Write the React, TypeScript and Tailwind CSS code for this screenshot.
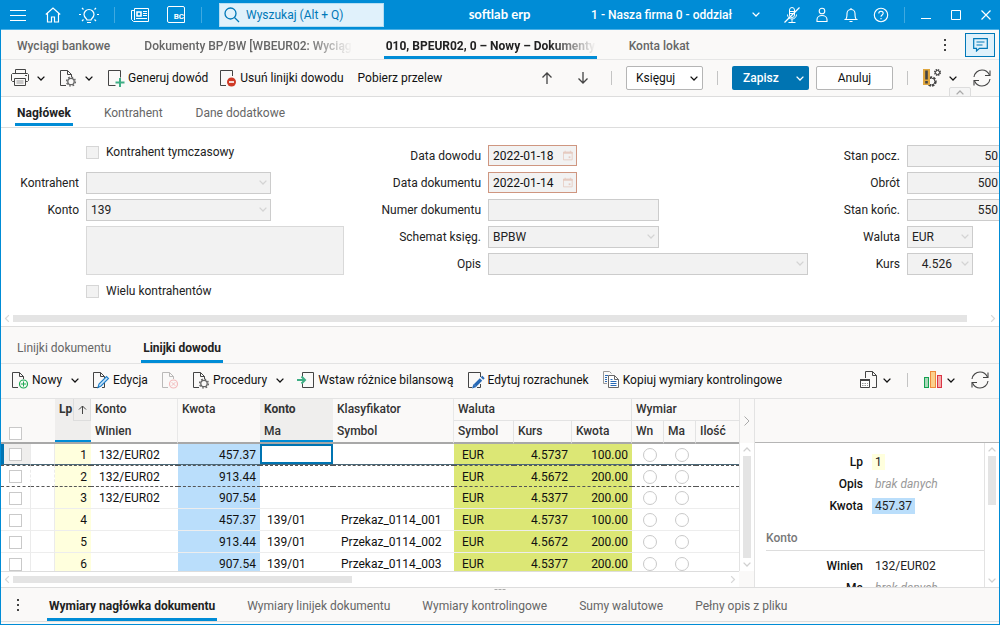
import { useState } from "react";
import clsx from "clsx";

interface IconProps {
  className?: string;
}

interface FieldProps {
  id: string;
  label: string;
  value?: string;
  className?: string;
}

interface Row {
  lp: number;
  winien: string;
  kwota: string;
  ma: string;
  symbol: string;
  kurs: string;
  kwotaWal: string;
}

const rows: Row[] = [
  { lp: 1, winien: "132/EUR02", kwota: "457.37", ma: "", symbol: "", kurs: "4.5737", kwotaWal: "100.00" },
  { lp: 2, winien: "132/EUR02", kwota: "913.44", ma: "", symbol: "", kurs: "4.5672", kwotaWal: "200.00" },
  { lp: 3, winien: "132/EUR02", kwota: "907.54", ma: "", symbol: "", kurs: "4.5377", kwotaWal: "200.00" },
  { lp: 4, winien: "", kwota: "457.37", ma: "139/01", symbol: "Przekaz_0114_001", kurs: "4.5737", kwotaWal: "100.00" },
  { lp: 5, winien: "", kwota: "913.44", ma: "139/01", symbol: "Przekaz_0114_002", kurs: "4.5672", kwotaWal: "200.00" },
  { lp: 6, winien: "", kwota: "907.54", ma: "139/01", symbol: "Przekaz_0114_003", kurs: "4.5377", kwotaWal: "200.00" },
];

const Chevron = ({ className }: IconProps) => (
  <svg viewBox="0 0 8 5" className={clsx("h-[5px] w-2 shrink-0", className)} fill="none" stroke="currentColor" strokeWidth="1.3">
    <path d="M0.6 0.6 4 4l3.4-3.4" />
  </svg>
);

/* page outline with a folded corner, shared by most toolbar icons */
const Sheet = () => <path d="M7 16.5H1.5v-15h7l4 4V8M8.5 1.5v4h4" stroke="#444" />;

const PrinterIcon = () => (
  <svg viewBox="0 0 18 18" className="h-[18px] w-[18px]" fill="none" stroke="#444">
    <path d="M4.5 4.5v-4h10v4M3.500 12.500h-2l-1-1v-6l1-1h15l1 1v6l-1 1h-2M3.500 9.500h11v7h-11z" />
    <path d="M5.500 12h7M5.500 14h7" stroke="#999" />
    <path d="M14 6.5h2" />
  </svg>
);

const SheetGearIcon = () => (
  <svg viewBox="0 0 18 18" className="h-[18px] w-[18px]" fill="none">
    <Sheet />
    <circle cx="12" cy="12.5" r="3.2" stroke="#666" strokeWidth="1.3" />
    <circle cx="12" cy="12.5" r="4.4" stroke="#666" strokeWidth="1.4" strokeDasharray="1.7 1.75" />
  </svg>
);

const SheetPlusIcon = () => (
  <svg viewBox="0 0 18 18" className="h-[18px] w-[18px]" fill="none">
    <path d="M8.5 16.5h-7v-15h12v7" stroke="#444" />
    <path d="M13 9v9M8.5 13.5h9" stroke="#3fae85" strokeWidth="2" />
  </svg>
);

const SheetMinusIcon = () => (
  <svg viewBox="0 0 18 18" className="h-[18px] w-[18px]" fill="none">
    <path d="M7 16.5H1.5v-15h12V7" stroke="#444" />
    <circle cx="12.5" cy="13" r="4.5" fill="#cf3a26" />
    <path d="M10 13h5" stroke="#fff" strokeWidth="1.6" />
  </svg>
);

const NewSheetIcon = () => (
  <svg viewBox="0 0 18 18" className="h-[18px] w-[18px]" fill="none">
    <Sheet />
    <circle cx="12.5" cy="13" r="4" stroke="#1faa53" strokeWidth="1.2" />
    <path d="M12.5 10.5v5M10 13h5" stroke="#1faa53" />
  </svg>
);

const EditSheetIcon = () => (
  <svg viewBox="0 0 18 18" className="h-[18px] w-[18px]" fill="none">
    <Sheet />
    <path d="M12.5 12v4.5H10" stroke="#444" />
    <path d="m6 16.500 1-3.500 7.500-7.500 2 2L9 15z" fill="#cfe6f8" stroke="#1e7fcb" strokeWidth="1.1" />
  </svg>
);

const DeleteSheetIcon = () => (
  <svg viewBox="0 0 18 18" className="h-[18px] w-[18px]" fill="none" opacity="0.35">
    <Sheet />
    <circle cx="12.5" cy="13" r="4" stroke="#e5484d" strokeWidth="1.2" />
    <path d="m10.7 11.200 3.600 3.600m0-3.600-3.600 3.600" stroke="#e5484d" />
  </svg>
);

const InsertIcon = () => (
  <svg viewBox="0 0 18 18" className="h-[18px] w-[18px]" fill="none">
    <path d="M5.5 6V1.5h11v15h-11V12" stroke="#444" />
    <path d="M0 9h8M4.500 5.500 8 9l-3.500 3.500" stroke="#3fae85" strokeWidth="2" />
  </svg>
);

const EditFormIcon = () => (
  <svg viewBox="0 0 18 18" className="h-[18px] w-[18px]" fill="none">
    <path d="M5 16.5H1.5v-15h12V6M13.5 13v3.500H10" stroke="#444" />
    <path d="m8 14.500 6-6" stroke="#2769b5" strokeWidth="3.4" />
    <path d="m15 7.500 1.500-1.500" stroke="#2769b5" strokeWidth="3.4" />
    <path d="M5 17.500 6.500 13l3 3z" fill="#2769b5" />
  </svg>
);

const CopyIcon = () => (
  <svg viewBox="0 0 18 18" className="h-[18px] w-[18px]" fill="none">
    <path d="M5 12.500H1.500v-12h6l2 2" stroke="#999" />
    <path d="M3 4.500h3M3 6.500h2M3 8.500h2M3 10.500h2" stroke="#2769b5" />
    <path d="M6.500 4.500h6l4 4v8h-10zM12.500 4.500v4h4" stroke="#666" fill="#fff" />
    <path d="M8.500 8.500h2M8.500 10.500h6M8.500 12.500h6M8.500 14.500h6" stroke="#2769b5" />
  </svg>
);

const WarnGearIcon = () => (
  <svg viewBox="0 0 18 18" className="h-[18px] w-[18px]" fill="none" stroke="#444">
    <circle cx="8.5" cy="12.500" r="4.300" strokeWidth="1.8" strokeDasharray="2.4 1.2" />
    <circle cx="8.5" cy="12.500" r="3.400" />
    <circle cx="14.5" cy="3.500" r="2.700" strokeWidth="1.6" strokeDasharray="1.4 0.7" />
    <circle cx="14.5" cy="3.500" r="2" />
    <rect x="0" y="0" width="7" height="16" fill="#dfa63e" stroke="none" />
    <path d="M3.500 1.500v9M3.500 12v2.500" strokeWidth="2.6" />
  </svg>
);

const RefreshIcon = () => (
  <svg viewBox="0 0 18 18" className="h-[18px] w-[18px]" fill="none" stroke="#444" strokeWidth="1.1">
    <path d="M1 8C1.500 4 5 1 9 1c3.500 0 6 1.800 7.500 5M17 10c-.5 4-4 7-8 7-3.500 0-6-1.800-7.500-5" />
    <path d="M17 1.500v5h-5M1 16.500v-5h5" />
  </svg>
);

const PrintGridIcon = () => (
  <svg viewBox="0 0 18 18" className="h-[18px] w-[18px]" fill="none" stroke="#444">
    <path d="M5.500 7V0.500h7l4 4v12H12M12.500 0.500v4h4" />
    <path d="M0.500 8.500h9v8h-9z" fill="#fff" />
    <path d="M0 9h10" strokeWidth="2" />
    <path d="M2 12.500h6M2 14.500h6" stroke="#999" strokeDasharray="1.5 1" />
  </svg>
);

const ChartIcon = () => (
  <svg viewBox="0 0 18 18" className="h-[18px] w-[18px]">
    <rect x="0.5" y="6.500" width="4" height="10" fill="#a9d8b9" stroke="#14a150" />
    <rect x="6.5" y="0.500" width="5" height="16" fill="#fbd08c" stroke="#ee8a3c" />
    <rect x="13.5" y="4.500" width="4" height="12" fill="#f3a9a9" stroke="#dc3545" />
  </svg>
);

const CalendarIcon = () => (
  <svg viewBox="0 0 11 11" className="h-[11px] w-[11px]" fill="none" stroke="#e6cbc1">
    <path d="M0.500 1.500h10v9h-10z" />
    <path d="M0 2.500h11" strokeWidth="2" />
    <path d="M2.500 0v2M8.500 0v2" />
    <path d="M6.500 7.500h2" strokeWidth="2" />
  </svg>
);

const Dots = ({ label }: { label: string }) => (
  <button aria-label={label} className="flex w-4 flex-col items-center gap-[2px]">
    <span className="size-[2px] bg-[#444]" />
    <span className="my-px size-[2px] bg-[#444]" />
    <span className="size-[2px] bg-[#444]" />
  </button>
);

const Divider = () => <span className="h-[14px] w-px shrink-0 bg-[#c4c4c4]" />;

const ToolButton = ({ icon, label, menu }: { icon: React.ReactElement; label: string; menu?: boolean }) => (
  <button className="flex shrink-0 items-center gap-[3px] whitespace-nowrap">
    {icon}
    <span>{label}</span>
    {menu && <Chevron className="ml-1.5" />}
  </button>
);

const IconMenu = ({ icon, label, tight }: { icon: React.ReactElement; label: string; tight?: boolean }) => (
  <button aria-label={label} className={clsx("flex shrink-0 items-center", tight ? "gap-[5px]" : "gap-2")}>
    {icon}
    <Chevron />
  </button>
);

const Tab = ({ label, active, onClick }: { label: string; active: boolean; onClick: () => void }) => (
  <button
    onClick={onClick}
    className={clsx(
      "shrink-0 border-b-3 px-[2px] pt-[5px] whitespace-nowrap",
      active ? "border-[#008cd6] font-bold text-[#222]" : "border-transparent text-[#666]"
    )}
  >
    {label}
  </button>
);

const fieldBox = "h-[22px] rounded-none border border-[#cccccc] bg-[#f2f2f2] px-1 text-[#222] opacity-100";

const TextField = ({ id, label, value = "", className }: FieldProps) => (
  <>
    <label htmlFor={id} className="text-right">{label}</label>
    <input id={id} defaultValue={value} disabled className={clsx(fieldBox, className)} />
  </>
);

const SelectField = ({ id, label, value = "", className }: FieldProps) => (
  <>
    <label htmlFor={id} className="text-right">{label}</label>
    <div className={clsx("relative flex", className)}>
      <select id={id} disabled className={clsx(fieldBox, "w-full appearance-none")}>
        <option>{value}</option>
      </select>
      <Chevron className="absolute top-2 right-1 text-[#d4d4d4]" />
    </div>
  </>
);

const DateField = ({ id, label, value = "" }: FieldProps) => (
  <>
    <label htmlFor={id} className="text-right">{label}</label>
    <div className="flex h-[21px] w-[89px] items-center self-start border border-[#cf9680] bg-[#f2f2f2] pr-[3px]">
      <input id={id} defaultValue={value} disabled className="w-full min-w-0 px-1 text-[#111]" />
      <CalendarIcon />
    </div>
  </>
);

const CheckField = ({ id, label }: { id: string; label: string }) => (
  <div className="col-start-2 flex h-[14px] items-center gap-[7px]">
    <input id={id} type="checkbox" disabled className="size-[13px] appearance-none border border-[#d6d6d6] bg-[#f2f2f2]" />
    <label htmlFor={id}>{label}</label>
  </div>
);

const VScroll = ({ thumb }: { thumb: string }) => (
  <div className="flex w-[15px] shrink-0 flex-col items-center gap-1 border-l border-[#e3e3e3] py-1 text-[#d0d0d0]">
    <Chevron className="rotate-180" />
    <div className="min-h-0 w-2 flex-1">
      <div className={clsx("bg-[#e4e4e4]", thumb)} />
    </div>
    <Chevron />
  </div>
);

const HScroll = ({ thumb }: { thumb: string }) => (
  <div className="flex items-center gap-[2px] px-[2px] text-[#d8d8d8]">
    <Chevron className="rotate-90" />
    <div className="min-w-0 flex-1">
      <div className={clsx("h-[7px] bg-[#e4e4e4]", thumb)} />
    </div>
    <Chevron className="-rotate-90" />
  </div>
);

const TitleBar = () => (
  <header className="flex h-[30px] shrink-0 items-center border-b border-[#4db1e6] bg-[#008cd6] pr-2 pl-[9px] text-white">
    <button aria-label="Menu">
      <svg viewBox="0 0 16 12" className="h-3 w-4" stroke="currentColor">
        <path d="M0 1.500h16M0 6.500h16M0 11.500h16" />
      </svg>
    </button>
    <button aria-label="Start" className="ml-[19px]">
      <svg viewBox="0 0 16 16" className="size-4" fill="none" stroke="currentColor" strokeWidth="1.2">
        <path d="M0.800 7.500 8 1l7.200 6.500M2.500 6.500v8.500h4v-5h3v5h4V6.500" />
      </svg>
    </button>
    <button aria-label="Podpowiedzi" className="ml-[18px]">
      <svg viewBox="0 0 20 18" className="h-[18px] w-5" fill="none" stroke="currentColor" strokeWidth="1.2">
        <path d="M8 14c0-1.500-3-2.500-3-5.500a5 5 0 0 1 10 0c0 3-3 4-3 5.500zM8 16.500h4" />
        <path d="M0 8.500h2M18 8.500h2M3 2l1.500 1.500M17 2l-1.500 1.500M3 15l1.500-1.500M17 15l-1.500-1.500" />
      </svg>
    </button>
    <span className="ml-[15px] h-4 w-px bg-[#3fa9e0]" />
    <button aria-label="Aktualności" className="ml-4">
      <svg viewBox="0 0 18 16" className="h-4 w-[18px]" fill="none" stroke="currentColor">
        <path d="M3.500 1.500h14v13h-15l-2-2v-9h3zM3.500 3v10" />
        <path d="M6 5h4v4H6z" strokeWidth="1.6" />
        <path d="M12 4.500h4M12 6.500h4M12 8.500h4M5 11.500h11" />
      </svg>
    </button>
    <button aria-label="BC" className="ml-[18px] flex h-[17px] w-[18px] items-end justify-end rounded-l-xs rounded-tr-xs border border-white text-[8px] leading-[10px] font-bold">
      BC
    </button>
    <span className="ml-4 h-4 w-px bg-[#3fa9e0]" />
    <label className="ml-[17px] flex h-6 w-[165px] items-center gap-1.5 border border-[#b5def3] bg-[#e0f1fb] px-1 text-[#0078b8]">
      <svg viewBox="0 0 16 16" className="size-4 shrink-0" fill="none" stroke="currentColor" strokeWidth="1.3">
        <circle cx="6.5" cy="6.5" r="5.5" />
        <path d="m10.500 10.500 4.500 4.500" />
      </svg>
      <input aria-label="Wyszukaj" placeholder="Wyszukaj (Alt + Q)" className="w-full min-w-0 outline-none placeholder:text-[#0078b8]" />
    </label>
    <span className="flex-1 pl-6 text-center font-['Lato'] text-[13px] font-bold">softlab erp</span>
    <button className="mr-6 flex items-center gap-5 font-medium">
      1 - Nasza firma 0 - oddział
      <Chevron />
    </button>
    <div className="flex items-center gap-[15px]">
      <button aria-label="Mikrofon">
        <svg viewBox="0 0 16 16" className="size-4" fill="none" stroke="currentColor">
          <path d="M5.500 3a2.500 2.500 0 0 1 5 0v5a2.500 2.500 0 0 1-5 0zM3.500 7.500a4.500 4.500 0 0 0 9 0M8 12v3M4.500 15.500h7M5.500 4.500h5M5.500 6.500h5" />
          <path d="M0.500 15.500 15.500 0.500" strokeWidth="1.3" />
        </svg>
      </button>
      <button aria-label="Użytkownik">
        <svg viewBox="0 0 14 16" className="h-4 w-3.5" fill="none" stroke="currentColor" strokeWidth="1.1">
          <circle cx="7" cy="4" r="2.8" />
          <path d="M2 14.500v-2a5 4 0 0 1 10 0v2z" />
        </svg>
      </button>
      <button aria-label="Powiadomienia">
        <svg viewBox="0 0 14 16" className="h-4 w-3.5" fill="none" stroke="currentColor" strokeWidth="1.1">
          <path d="M1.500 12.500c1.500-1 1.500-3 1.500-6a4 4 0 0 1 8 0c0 3 0 5 1.500 6zM5.500 14.500h3M7 1v1.500" />
        </svg>
      </button>
      <button aria-label="Pomoc">
        <svg viewBox="0 0 16 16" className="size-4" fill="none" stroke="currentColor" strokeWidth="1.1">
          <circle cx="8" cy="8" r="6.7" />
          <path d="M5.800 6.500C5.800 3.600 10.200 3.600 10.200 6.300 10.200 8 8 7.900 8 9.800M8 11v1.300" />
        </svg>
      </button>
    </div>
    <span className="ml-[15px] h-4 w-px bg-[#3fa9e0]" />
    <div className="ml-4 flex items-center gap-5">
      <button aria-label="Minimalizuj">
        <svg viewBox="0 0 10 10" className="size-2.5" stroke="currentColor"><path d="M0 8.500h10" /></svg>
      </button>
      <button aria-label="Maksymalizuj">
        <svg viewBox="0 0 10 10" className="size-2.5" fill="none" stroke="currentColor"><path d="M0.500 0.500h9v9h-9z" /></svg>
      </button>
      <button aria-label="Zamknij">
        <svg viewBox="0 0 10 10" className="size-2.5" stroke="currentColor" strokeWidth="1.2"><path d="m0.500 0.500 9 9m0-9-9 9" /></svg>
      </button>
    </div>
  </header>
);

const documents = ["Wyciągi bankowe", "Dokumenty BP/BW [WBEUR02: Wyciąg", "010, BPEUR02, 0 – Nowy – Dokumenty", "Konta lokat"];

const DocumentTabs = () => {
  const [current, setCurrent] = useState(2);

  return (
    <nav className="flex h-[30px] shrink-0 items-center border-b border-[#e6e6e6] pl-[14px]">
      <div className="flex h-full flex-1 gap-[30px]">
        {documents.map((name, i) => (
          <button
            key={name}
            onClick={() => setCurrent(i)}
            className={clsx(
              "max-w-[213px] overflow-hidden border-b-3 px-px pt-[5px] whitespace-nowrap",
              i === current ? "border-[#008cd6] font-bold text-[#222]" : "border-transparent font-medium text-[#666]"
            )}
          >
            <span className={clsx("block px-px", (i === 1 || i === 2) && "[mask-image:linear-gradient(to_right,black_78%,transparent)]")}>
              {name}
            </span>
          </button>
        ))}
      </div>
      <Dots label="Więcej" />
      <button aria-label="Komentarze" className="mr-1 ml-3 flex h-6 w-[30px] items-center justify-center border border-[#0078b8] bg-[#dff1fb]">
        <svg viewBox="0 0 15 15" className="size-[15px]" fill="none" stroke="#0078b8" strokeWidth="1.2">
          <path d="M0.700 1.700h13.600v9.600H6.500L3.500 14v-2.700H0.700zM3.500 5h8M3.500 8h6" />
        </svg>
      </button>
    </nav>
  );
};

const MainToolbar = () => (
  <div className="relative flex h-[37px] shrink-0 items-center border-b border-[#dddddd] pr-2 pl-[10px] text-[#111]">
    <div className="flex items-center gap-[14px]">
      <IconMenu icon={<PrinterIcon />} label="Drukuj" />
      <IconMenu icon={<SheetGearIcon />} label="Ustawienia dokumentu" />
      <div className="flex items-center gap-[11px]">
        <ToolButton icon={<SheetPlusIcon />} label="Generuj dowód" />
        <ToolButton icon={<SheetMinusIcon />} label="Usuń linijki dowodu" />
      </div>
      <button>Pobierz przelew</button>
    </div>
    <div className="ml-auto flex items-center">
      <button aria-label="W górę">
        <svg viewBox="0 0 12 12" className="size-3" fill="none" stroke="#444" strokeWidth="1.3"><path d="M6 12V1M1.500 5.500 6 1l4.500 4.500" /></svg>
      </button>
      <button aria-label="W dół" className="mr-[22px] ml-6">
        <svg viewBox="0 0 12 12" className="size-3" fill="none" stroke="#444" strokeWidth="1.3"><path d="M6 0v11M1.500 6.500 6 11l4.500-4.500" /></svg>
      </button>
      <Divider />
      <button className="mx-[14px] flex h-6 w-[77px] items-center justify-between rounded-xs border border-[#b5b5b5] bg-white pr-1 pl-[9px]">
        Księguj
        <Chevron />
      </button>
      <Divider />
      <button className="mr-[7px] ml-[14px] flex h-6 w-[77px] items-center justify-between rounded-xs bg-[#0074b2] pr-[5px] pl-[11px] font-medium text-white">
        Zapisz
        <Chevron />
      </button>
      <button className="mr-[14px] h-6 w-[77px] rounded-xs border border-[#b5b5b5] bg-white">Anuluj</button>
      <Divider />
      <div className="ml-[15px]">
        <IconMenu icon={<WarnGearIcon />} label="Ostrzeżenia" />
      </div>
      <button aria-label="Odśwież" className="ml-4"><RefreshIcon /></button>
    </div>
    <button aria-label="Zwiń" className="absolute right-7 -bottom-px flex h-[10px] w-[22px] items-center justify-center rounded-t-xs border border-[#dddddd] bg-[#f5f5f5] text-[#aaa]">
      <Chevron className="rotate-180" />
    </button>
  </div>
);

const HeaderForm = () => {
  const [tab, setTab] = useState("Nagłówek");

  return (
    <section className="shrink-0 bg-white">
      <nav className="flex h-[31px] gap-[29px] border-b border-[#dddddd] pl-[14px]">
        {["Nagłówek", "Kontrahent", "Dane dodatkowe"].map((name) => (
          <div key={name} className="flex h-[29px]">
            <Tab label={name} active={tab === name} onClick={() => setTab(name)} />
          </div>
        ))}
      </nav>
      <div className="flex overflow-hidden pt-[17px] pb-[13px]">
        <div className="grid shrink-0 auto-rows-[22px] grid-cols-[78px_258px] items-center gap-x-[7px] gap-y-[5px]">
          <div className="col-span-2 grid grid-cols-subgrid self-start">
            <CheckField id="tymczasowy" label="Kontrahent tymczasowy" />
          </div>
          <SelectField id="kontrahent" label="Kontrahent" className="w-[185px]" />
          <SelectField id="konto" label="Konto" value="139" className="w-[185px]" />
          <textarea aria-label="Opis kontrahenta" disabled className="col-start-2 row-span-2 h-[49px] w-full resize-none border border-[#d9d9d9] bg-[#f2f2f2]" />
          <CheckField id="wielu" label="Wielu kontrahentów" />
        </div>
        <div className="grid shrink-0 auto-rows-[22px] grid-cols-[137px_320px] items-center gap-x-[7px] gap-y-[5px]">
          <DateField id="data-dowodu" label="Data dowodu" value="2022-01-18" />
          <DateField id="data-dokumentu" label="Data dokumentu" value="2022-01-14" />
          <TextField id="numer" label="Numer dokumentu" className="w-[171px]" />
          <SelectField id="schemat" label="Schemat księg." value="BPBW" className="w-[171px]" />
          <SelectField id="opis" label="Opis" />
        </div>
        <div className="grid shrink-0 auto-rows-[22px] grid-cols-[92px_112px] items-center gap-x-[7px] gap-y-[5px]">
          <TextField id="stan-pocz" label="Stan pocz." value="50" className="pr-5 text-right" />
          <TextField id="obrot" label="Obrót" value="500" className="pr-5 text-right" />
          <TextField id="stan-konc" label="Stan końc." value="550" className="pr-5 text-right" />
          <SelectField id="waluta" label="Waluta" value="EUR" className="w-[66px]" />
          <label htmlFor="kurs" className="text-right">Kurs</label>
          <div className="relative flex w-[66px]">
            <input id="kurs" defaultValue="4.526" disabled className={clsx(fieldBox, "w-full pr-5 text-right")} />
            <Chevron className="absolute top-2 right-1 text-[#d4d4d4]" />
          </div>
        </div>
      </div>
      <div className="border-b border-[#dddddd] pb-1">
        <HScroll thumb="mr-5" />
      </div>
    </section>
  );
};

const LinesToolbar = () => (
  <div className="flex h-[35px] shrink-0 items-center border-b border-[#e3e3e3] px-[10px] pb-[2px] text-[#111]">
    <div className="flex items-center gap-[13px]">
      <ToolButton icon={<NewSheetIcon />} label="Nowy" menu />
      <ToolButton icon={<EditSheetIcon />} label="Edycja" />
      <button aria-label="Usuń" disabled><DeleteSheetIcon /></button>
      <ToolButton icon={<SheetGearIcon />} label="Procedury" menu />
      <ToolButton icon={<InsertIcon />} label="Wstaw różnice bilansową" />
      <ToolButton icon={<EditFormIcon />} label="Edytuj rozrachunek" />
      <ToolButton icon={<CopyIcon />} label="Kopiuj wymiary kontrolingowe" />
    </div>
    <div className="ml-auto flex items-center gap-4">
      <IconMenu icon={<PrintGridIcon />} label="Wydruk listy" tight />
      <Divider />
      <IconMenu icon={<ChartIcon />} label="Wykres" tight />
      <button aria-label="Odśwież linijki"><RefreshIcon /></button>
    </div>
  </div>
);

const box = "block size-[13px] appearance-none border border-[#c9c9c9] bg-white";
const radio = "block size-3.5 appearance-none rounded-full border border-[#c9c9c9]";

const LinesTable = () => (
  <table className="w-[738px] table-fixed border-separate border-spacing-0">
    <colgroup>
      <col className="w-[30px]" />
      <col className="w-[24px]" />
      <col className="w-[36px]" />
      <col className="w-[87px]" />
      <col className="w-[82px]" />
      <col className="w-[73px]" />
      <col className="w-[121px]" />
      <col className="w-[60px]" />
      <col className="w-[58px]" />
      <col className="w-[60px]" />
      <col className="w-[32px]" />
      <col className="w-[32px]" />
      <col className="w-[43px]" />
    </colgroup>
    <thead className="bg-[#faf9f8] text-left text-[#333] [&_th]:px-1 [&_th]:pt-0 [&_th]:pb-[2px] [&_th]:font-medium">
      <tr className="h-[22px]">
        <th colSpan={2} />
        <th className="relative bg-[#efeeed] font-bold!">
          Lp
          <span className="absolute top-0 right-0 flex h-[22px] w-[18px] items-center justify-center border border-t-0 border-[#dddddd]">
            <svg viewBox="0 0 9 9" className="size-[9px]" fill="none" stroke="#444"><path d="M4.500 9V1M1 4.500 4.500 1 8 4.500" /></svg>
          </span>
        </th>
        <th className="border-r border-[#e8e8e8]">Konto</th>
        <th>Kwota</th>
        <th className="bg-[#efeeed] font-bold!">Konto</th>
        <th className="border-r border-[#e8e8e8]">Klasyfikator</th>
        <th colSpan={3} className="border-r border-b border-[#e3e3e3]">Waluta</th>
        <th colSpan={3} className="border-b border-[#e3e3e3]">Wymiar</th>
      </tr>
      <tr className="h-[23px] [&>th]:border-b-2 [&>th]:border-b-[#a8a8a8]">
        <th colSpan={2} className="pt-1! pb-0! pl-2!">
          <input type="checkbox" aria-label="Zaznacz wszystkie" className={clsx(box, "border-[#aaa]")} />
        </th>
        <th className="bg-[#efeeed] shadow-[inset_0_-2px_0_#008cd6]" />
        <th className="border-r border-r-[#e8e8e8]">Winien</th>
        <th />
        <th className="bg-[#efeeed] shadow-[inset_0_-2px_0_#008cd6]">Ma</th>
        <th className="border-r border-r-[#e8e8e8]">Symbol</th>
        <th className="border-r border-r-[#e3e3e3]">Symbol</th>
        <th className="border-r border-r-[#e3e3e3]">Kurs</th>
        <th className="border-r border-r-[#e3e3e3]">Kwota</th>
        <th className="border-r border-r-[#e3e3e3]">Wn</th>
        <th className="border-r border-r-[#e3e3e3]">Ma</th>
        <th>Ilość</th>
      </tr>
    </thead>
    <tbody className="text-[#111]">
      {rows.map((row, i) => (
        <tr
          key={row.lp}
          className={clsx(
            "[&>td]:border-b [&>td]:pt-px [&>td]:pb-0",
            i === 0 && "h-[21px] [&>td]:border-b-[#4b6878]",
            i === 1 && "h-[22px] [&>td]:border-t [&>td]:border-dashed [&>td]:border-y-[#555]",
            i > 1 && "h-[22px] [&>td]:border-b-[#ededed]"
          )}
        >
          <td className={clsx("border-r border-r-[#ebebeb]", i === 0 ? "border-l-3 border-l-[#0074b2] bg-[#efeeed] pl-[5px]" : "pl-2")}>
            <input type="checkbox" aria-label={`Zaznacz ${row.lp}`} className={box} />
          </td>
          <td className="border-r border-r-[#ebebeb]" />
          <td className="bg-[#ffffdd] pr-1 text-right">{row.lp}</td>
          <td className="pl-2">{row.winien}</td>
          <td className="bg-[#badefb] pr-1 text-right">{row.kwota}</td>
          <td className={clsx("pl-[7px]", i === 0 && "shadow-[inset_0_0_0_2px_#0074b2]")}>{row.ma}</td>
          <td className="pl-2">{row.symbol}</td>
          <td className="bg-[#dce775] pl-2">EUR</td>
          <td className="bg-[#dce775] pr-1 text-right">{row.kurs}</td>
          <td className="bg-[#dce775] pr-1 text-right">{row.kwotaWal}</td>
          <td className="pl-[11px]">
            <input type="radio" name={`wymiar-${row.lp}`} aria-label="Wn" className={radio} />
          </td>
          <td className="pl-[11px]">
            <input type="radio" name={`wymiar-${row.lp}`} aria-label="Ma" className={radio} />
          </td>
          <td />
        </tr>
      ))}
    </tbody>
  </table>
);

const DetailRow = ({ label, value, mark }: { label: string; value?: string; mark?: string }) => (
  <div className="flex h-[22px] items-center">
    <dt className="w-[108px] text-right font-medium text-[#111]">{label}</dt>
    <dd className={clsx("ml-[9px] px-[3px]", mark, value ? "text-[#222]" : "text-[#999] italic")}>{value ?? "brak danych"}</dd>
  </div>
);

const Details = () => (
  <aside className="flex w-[245px] shrink-0 flex-col border-l border-[#e3e3e3]">
    <div className="h-11 shrink-0 border-b border-[#b5b5b5]" />
    <div className="flex min-h-0 flex-1 bg-white">
      <dl className="min-w-0 flex-1 overflow-hidden pt-2">
        <DetailRow label="Lp" value="1" mark="bg-[#ffffdd]" />
        <DetailRow label="Opis" />
        <DetailRow label="Kwota" value="457.37" mark="bg-[#badefb]" />
        <div className="mt-2 mb-1 ml-[11px] flex h-[26px] items-center border-b border-[#dddddd] font-medium text-[#777]">Konto</div>
        <DetailRow label="Winien" value="132/EUR02" />
        <DetailRow label="Ma" />
      </dl>
      <VScroll thumb="h-[49px]" />
    </div>
  </aside>
);

const Lines = () => {
  const [tab, setTab] = useState("Linijki dowodu");

  return (
    <section className="flex min-h-0 flex-1 flex-col">
      <nav className="flex h-[37px] shrink-0 gap-7 border-b border-[#e3e3e3] pl-[14px]">
        {["Linijki dokumentu", "Linijki dowodu"].map((name) => (
          <div key={name} className="flex h-[36px] pt-1">
            <Tab label={name} active={tab === name} onClick={() => setTab(name)} />
          </div>
        ))}
      </nav>
      <LinesToolbar />
      <div className="flex min-h-0 flex-1">
        <div className="flex min-w-0 flex-1 flex-col">
          <div className="flex min-h-0 flex-1">
            <div className="min-w-0 flex-1 overflow-hidden bg-white">
              <LinesTable />
            </div>
            <div className="flex flex-col">
              <div className="flex h-11 w-[15px] shrink-0 items-center justify-center border-l border-[#e3e3e3]">
                <button aria-label="Pokaż kolumny" className="text-[#aaa]">
                  <svg viewBox="0 0 6 10" className="h-2.5 w-1.5" fill="none" stroke="currentColor"><path d="m0.500 0.500 4.500 4.500-4.500 4.500" /></svg>
                </button>
              </div>
              <div className="flex min-h-0 flex-1 bg-white">
                <VScroll thumb="h-full" />
              </div>
            </div>
          </div>
          <div className="flex h-4 shrink-0">
            <div className="min-w-0 flex-1 border-t border-[#dddddd] bg-white pt-1">
              <HScroll thumb="w-[339px]" />
            </div>
            <div className="w-[15px]" />
          </div>
        </div>
        <Details />
      </div>
    </section>
  );
};

const BottomTabs = () => {
  const [tab, setTab] = useState("Wymiary nagłówka dokumentu");

  return (
    <nav className="relative flex h-[35px] shrink-0 items-center border-y border-[#dddddd] pl-[9px]">
      <span className="absolute top-px left-1/2 flex -translate-x-1/2 gap-px">
        <i className="h-px w-[3px] bg-[#aaa]" />
        <i className="h-px w-[3px] bg-[#aaa]" />
        <i className="h-px w-[3px] bg-[#aaa]" />
      </span>
      <Dots label="Opcje zakładek" />
      <div className="ml-[21px] flex h-full gap-7">
        {["Wymiary nagłówka dokumentu", "Wymiary linijek dokumentu", "Wymiary kontrolingowe", "Sumy walutowe", "Pełny opis z pliku"].map((name) => (
          <Tab key={name} label={name} active={tab === name} onClick={() => setTab(name)} />
        ))}
      </div>
    </nav>
  );
};

const App = () => {
  return (
    <div className="flex h-screen min-h-[500px] flex-col overflow-hidden border-x border-b border-[#008cd6] bg-[#faf9f8] pb-[2px] font-['Roboto',sans-serif] text-xs text-[#222]">
      <TitleBar />
      <DocumentTabs />
      <MainToolbar />
      <HeaderForm />
      <Lines />
      <BottomTabs />
    </div>
  );
};

export default App;
